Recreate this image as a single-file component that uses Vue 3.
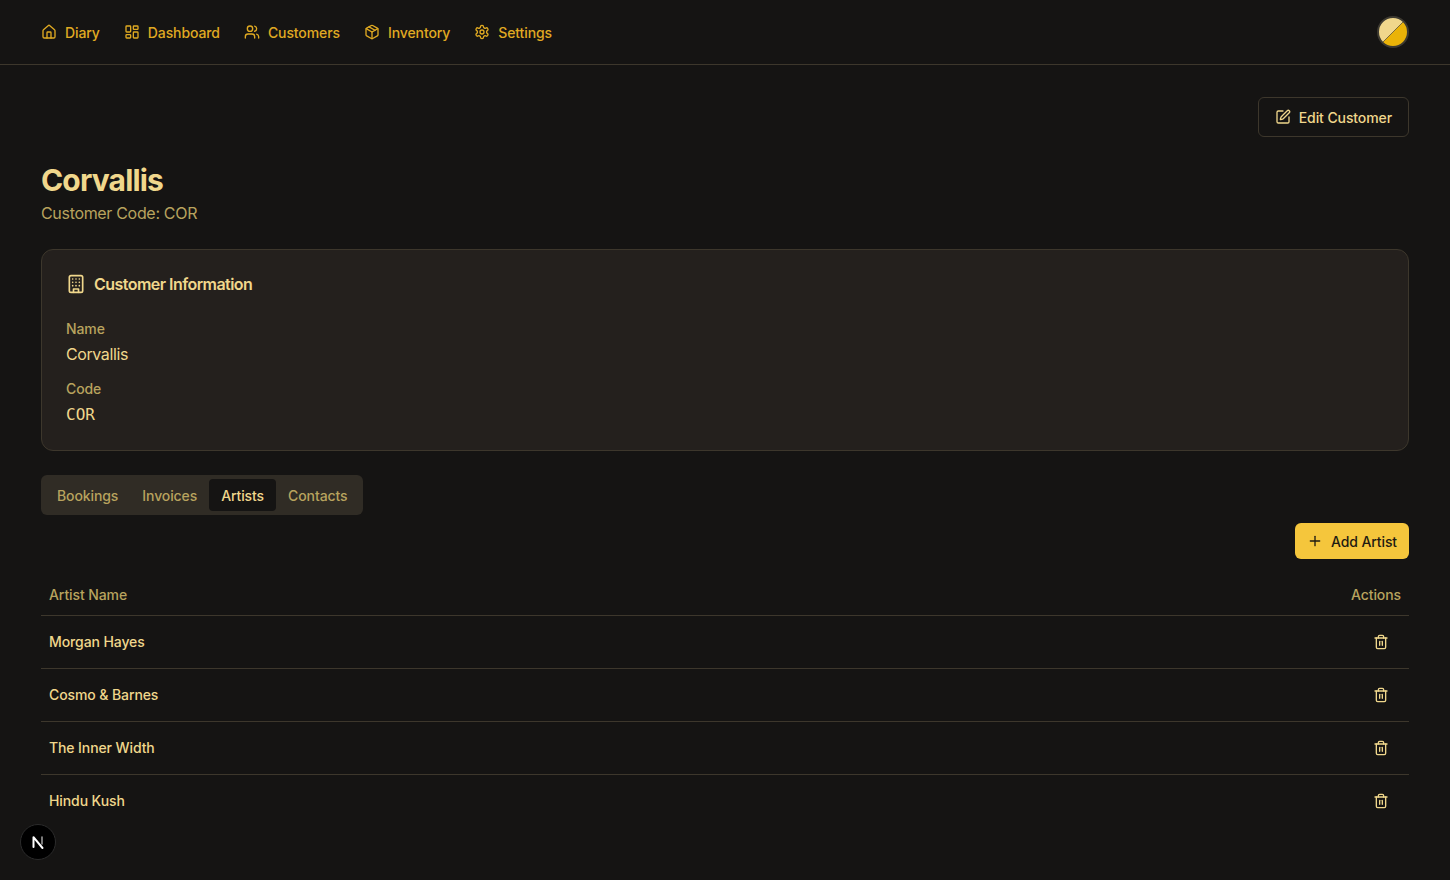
<script setup>
const nav = [
  { label: 'Diary', icon: 'home' },
  { label: 'Dashboard', icon: 'dash' },
  { label: 'Customers', icon: 'users' },
  { label: 'Inventory', icon: 'box' },
  { label: 'Settings', icon: 'gear' },
]
const tabs = ['Bookings', 'Invoices', 'Artists', 'Contacts']
const artists = ['Morgan Hayes', 'Cosmo & Barnes', 'The Inner Width', 'Hindu Kush']
</script>

<template>
  <div class="page">
    <header class="topbar">
      <nav class="nav">
        <a v-for="n in nav" :key="n.label" class="nav-item">
          <svg class="ic16" viewBox="0 0 24 24">
            <template v-if="n.icon === 'home'">
              <path d="M15 21v-8a1 1 0 0 0-1-1h-4a1 1 0 0 0-1 1v8" />
              <path d="M3 10a2 2 0 0 1 .709-1.528l7-5.999a2 2 0 0 1 2.582 0l7 5.999A2 2 0 0 1 21 10v9a2 2 0 0 1-2 2H5a2 2 0 0 1-2-2z" />
            </template>
            <template v-else-if="n.icon === 'dash'">
              <rect x="3" y="3" width="7" height="9" rx="1" />
              <rect x="14" y="3" width="7" height="5" rx="1" />
              <rect x="14" y="12" width="7" height="9" rx="1" />
              <rect x="3" y="16" width="7" height="5" rx="1" />
            </template>
            <template v-else-if="n.icon === 'users'">
              <path d="M16 21v-2a4 4 0 0 0-4-4H6a4 4 0 0 0-4 4v2" />
              <circle cx="9" cy="7" r="4" />
              <path d="M22 21v-2a4 4 0 0 0-3-3.87" />
              <path d="M16 3.13a4 4 0 0 1 0 7.75" />
            </template>
            <template v-else-if="n.icon === 'box'">
              <path d="M21 8a2 2 0 0 0-1-1.73l-7-4a2 2 0 0 0-2 0l-7 4A2 2 0 0 0 3 8v8a2 2 0 0 0 1 1.73l7 4a2 2 0 0 0 2 0l7-4A2 2 0 0 0 21 16Z" />
              <path d="m3.3 7 8.7 5 8.7-5" />
              <path d="M12 22V12" />
              <path d="m7.5 4.27 9 5.15" />
            </template>
            <template v-else>
              <path d="M12.22 2h-.44a2 2 0 0 0-2 2v.18a2 2 0 0 1-1 1.73l-.43.25a2 2 0 0 1-2 0l-.15-.08a2 2 0 0 0-2.73.73l-.22.38a2 2 0 0 0 .73 2.73l.15.1a2 2 0 0 1 1 1.72v.51a2 2 0 0 1-1 1.74l-.15.09a2 2 0 0 0-.73 2.73l.22.38a2 2 0 0 0 2.73.73l.15-.08a2 2 0 0 1 2 0l.43.25a2 2 0 0 1 1 1.73V20a2 2 0 0 0 2 2h.44a2 2 0 0 0 2-2v-.18a2 2 0 0 1 1-1.73l.43-.25a2 2 0 0 1 2 0l.15.08a2 2 0 0 0 2.73-.73l.22-.39a2 2 0 0 0-.73-2.73l-.15-.08a2 2 0 0 1-1-1.74v-.5a2 2 0 0 1 1-1.74l.15-.09a2 2 0 0 0 .73-2.73l-.22-.38a2 2 0 0 0-2.73-.73l-.15.08a2 2 0 0 1-2 0l-.43-.25a2 2 0 0 1-1-1.73V4a2 2 0 0 0-2-2z" />
              <circle cx="12" cy="12" r="3" />
            </template>
          </svg>
          <span>{{ n.label }}</span>
        </a>
      </nav>
      <button class="theme-toggle" aria-label="Theme"></button>
    </header>

    <main class="main">
      <div class="actions">
        <button class="btn-outline">
          <svg class="ic16" viewBox="0 0 24 24">
            <path d="M12 3H5a2 2 0 0 0-2 2v14a2 2 0 0 0 2 2h14a2 2 0 0 0 2-2v-7" />
            <path d="M18.375 2.625a1 1 0 0 1 3 3l-9.013 9.014a2 2 0 0 1-.853.505l-2.873.84a.5.5 0 0 1-.62-.62l.84-2.873a2 2 0 0 1 .506-.852z" />
          </svg>
          Edit Customer
        </button>
      </div>

      <h1 class="title">Corvallis</h1>
      <p class="subtitle">Customer Code: COR</p>

      <section class="card">
        <h2 class="card-title">
          <svg class="ic20" viewBox="0 0 24 24">
            <rect x="4" y="2" width="16" height="20" rx="2" />
            <path d="M9 22v-4h6v4" />
            <path d="M8 6h.01M16 6h.01M12 6h.01M12 10h.01M12 14h.01M16 10h.01M16 14h.01M8 10h.01M8 14h.01" />
          </svg>
          Customer Information
        </h2>
        <div class="field">
          <div class="field-label">Name</div>
          <div class="field-value">Corvallis</div>
        </div>
        <div class="field">
          <div class="field-label">Code</div>
          <div class="field-value mono">COR</div>
        </div>
      </section>

      <div class="tabs">
        <button v-for="t in tabs" :key="t" class="tab" :class="{ active: t === 'Artists' }">{{ t }}</button>
      </div>

      <div class="add-row">
        <button class="btn-primary">
          <svg class="ic16" viewBox="0 0 24 24"><path d="M5 12h14" /><path d="M12 5v14" /></svg>
          Add Artist
        </button>
      </div>

      <table class="table">
        <thead>
          <tr>
            <th class="left">Artist Name</th>
            <th class="right">Actions</th>
          </tr>
        </thead>
        <tbody>
          <tr v-for="a in artists" :key="a">
            <td class="name">{{ a }}</td>
            <td class="right">
              <button class="icon-btn" aria-label="Delete">
                <svg class="ic16" viewBox="0 0 24 24">
                  <path d="M3 6h18" />
                  <path d="M19 6v14a2 2 0 0 1-2 2H7a2 2 0 0 1-2-2V6" />
                  <path d="M8 6V4a2 2 0 0 1 2-2h4a2 2 0 0 1 2 2v2" />
                  <path d="M10 11v6" />
                  <path d="M14 11v6" />
                </svg>
              </button>
            </td>
          </tr>
        </tbody>
      </table>
    </main>

    <div class="dev-badge">
      <svg viewBox="0 0 20 20" width="20" height="20">
        <path d="M5.5 15V5.2L14.5 16" fill="none" stroke="#fff" stroke-width="2" />
        <path d="M14 5v7" fill="none" stroke="#9a9a9a" stroke-width="1.6" />
      </svg>
    </div>
  </div>
</template>

<style>
html, body { margin: 0; background: #151413; overflow: hidden; }
</style>

<style scoped>
.page {
  position: relative;
  height: 880px;
  overflow: hidden;
  background: #151413;
  color: #f0d78c;
  font-family: Inter, "Liberation Sans", sans-serif;
  font-size: 14px;
  letter-spacing: -0.1px;
}
svg { fill: none; stroke: currentColor; stroke-width: 2; stroke-linecap: round; stroke-linejoin: round; flex: none; }
.ic16 { width: 16px; height: 16px; }
.ic20 { width: 20px; height: 20px; }
button { font-family: inherit; letter-spacing: inherit; cursor: pointer; }

.topbar {
  display: flex;
  align-items: center;
  justify-content: space-between;
  height: 64px;
  padding: 0 41px;
  border-bottom: 1px solid #3d372c;
}
.nav { display: flex; gap: 24px; }
.nav-item {
  display: flex;
  align-items: center;
  gap: 8px;
  color: #e0aa22;
  font-weight: 550;
  line-height: 20px;
}
.nav-item span { position: relative; top: 1px; }
.theme-toggle {
  width: 32px;
  height: 32px;
  padding: 0;
  box-sizing: border-box;
  border-radius: 50%;
  border: 2px solid #3d3a31;
  background: linear-gradient(135deg, #f0d78c 0 49.5%, #7a6a3a 49.5% 50.5%, #eab308 50.5% 100%);
}

.main { padding: 32px 41px 0; }
.actions { display: flex; justify-content: flex-end; }
.btn-outline {
  display: flex;
  align-items: center;
  gap: 8px;
  height: 40px;
  padding: 0 16px;
  background: transparent;
  border: 1px solid #3d372c;
  border-radius: 6px;
  color: #f0d78c;
  font-size: 14px;
  font-weight: 550;
}
.title {
  margin: 25px 0 0;
  font-size: 30px;
  line-height: 36px;
  font-weight: 700;
  letter-spacing: -0.85px;
}
.subtitle {
  margin: 3px 0 0;
  font-size: 16px;
  line-height: 24px;
  color: #b8a35e;
  letter-spacing: -0.32px;
}
.card {
  box-sizing: border-box;
  height: 202px;
  margin-top: 24px;
  padding: 24px;
  background: #24201d;
  border: 1px solid #3d372c;
  border-radius: 12px;
}
.card-title {
  display: flex;
  align-items: center;
  gap: 8px;
  margin: 0 0 25px;
  font-size: 16px;
  line-height: 20px;
  font-weight: 600;
  letter-spacing: -0.54px;
}
.field { height: 60px; }
.field-label { color: #b8a35e; font-weight: 500; line-height: 20px; }
.field-value { margin-top: 3px; font-size: 16px; line-height: 24px; letter-spacing: -0.4px; }
.mono { font-family: "DejaVu Sans Mono", "Liberation Mono", monospace; letter-spacing: 0; padding-top: 1px; }

.tabs {
  display: inline-flex;
  align-items: center;
  height: 40px;
  box-sizing: border-box;
  padding: 4px;
  margin-top: 24px;
  background: #302c25;
  border-radius: 6px;
  vertical-align: top;
}
.tab {
  height: 32px;
  padding: 0 12px;
  border: 0;
  border-radius: 4px;
  background: transparent;
  color: #b8a35e;
  font-size: 14px;
  font-weight: 550;
}
.tab.active { background: #151413; color: #f0d78c; }

.add-row { display: flex; justify-content: flex-end; margin-top: 8px; }
.btn-primary {
  display: flex;
  align-items: center;
  gap: 8px;
  height: 36px;
  padding: 0 12px;
  border: 0;
  border-radius: 6px;
  background: #f5c63c;
  color: #1f1b12;
  font-size: 14px;
  font-weight: 500;
}

.table { width: 100%; border-collapse: collapse; margin-top: 16px; }
th {
  height: 40px;
  padding: 0 8px;
  box-sizing: border-box;
  color: #b8a35e;
  font-weight: 550;
  font-size: 14px;
  border-bottom: 1px solid #3d372c;
}
.left { text-align: left; }
.right { text-align: right; }
td {
  height: 53px;
  padding: 0 8px;
  box-sizing: border-box;
  border-bottom: 1px solid #3d372c;
}
tbody tr:last-child td { border-bottom: 0; }
.name { font-weight: 550; }
.icon-btn {
  display: inline-flex;
  align-items: center;
  justify-content: center;
  width: 40px;
  height: 36px;
  padding: 0;
  border: 0;
  background: transparent;
  color: #f0d78c;
  vertical-align: middle;
}

.dev-badge {
  position: absolute;
  left: 20px;
  top: 824px;
  width: 36px;
  height: 36px;
  box-sizing: border-box;
  display: flex;
  align-items: center;
  justify-content: center;
  border-radius: 50%;
  background: #000;
  border: 1px solid #2b2b2b;
}
</style>
